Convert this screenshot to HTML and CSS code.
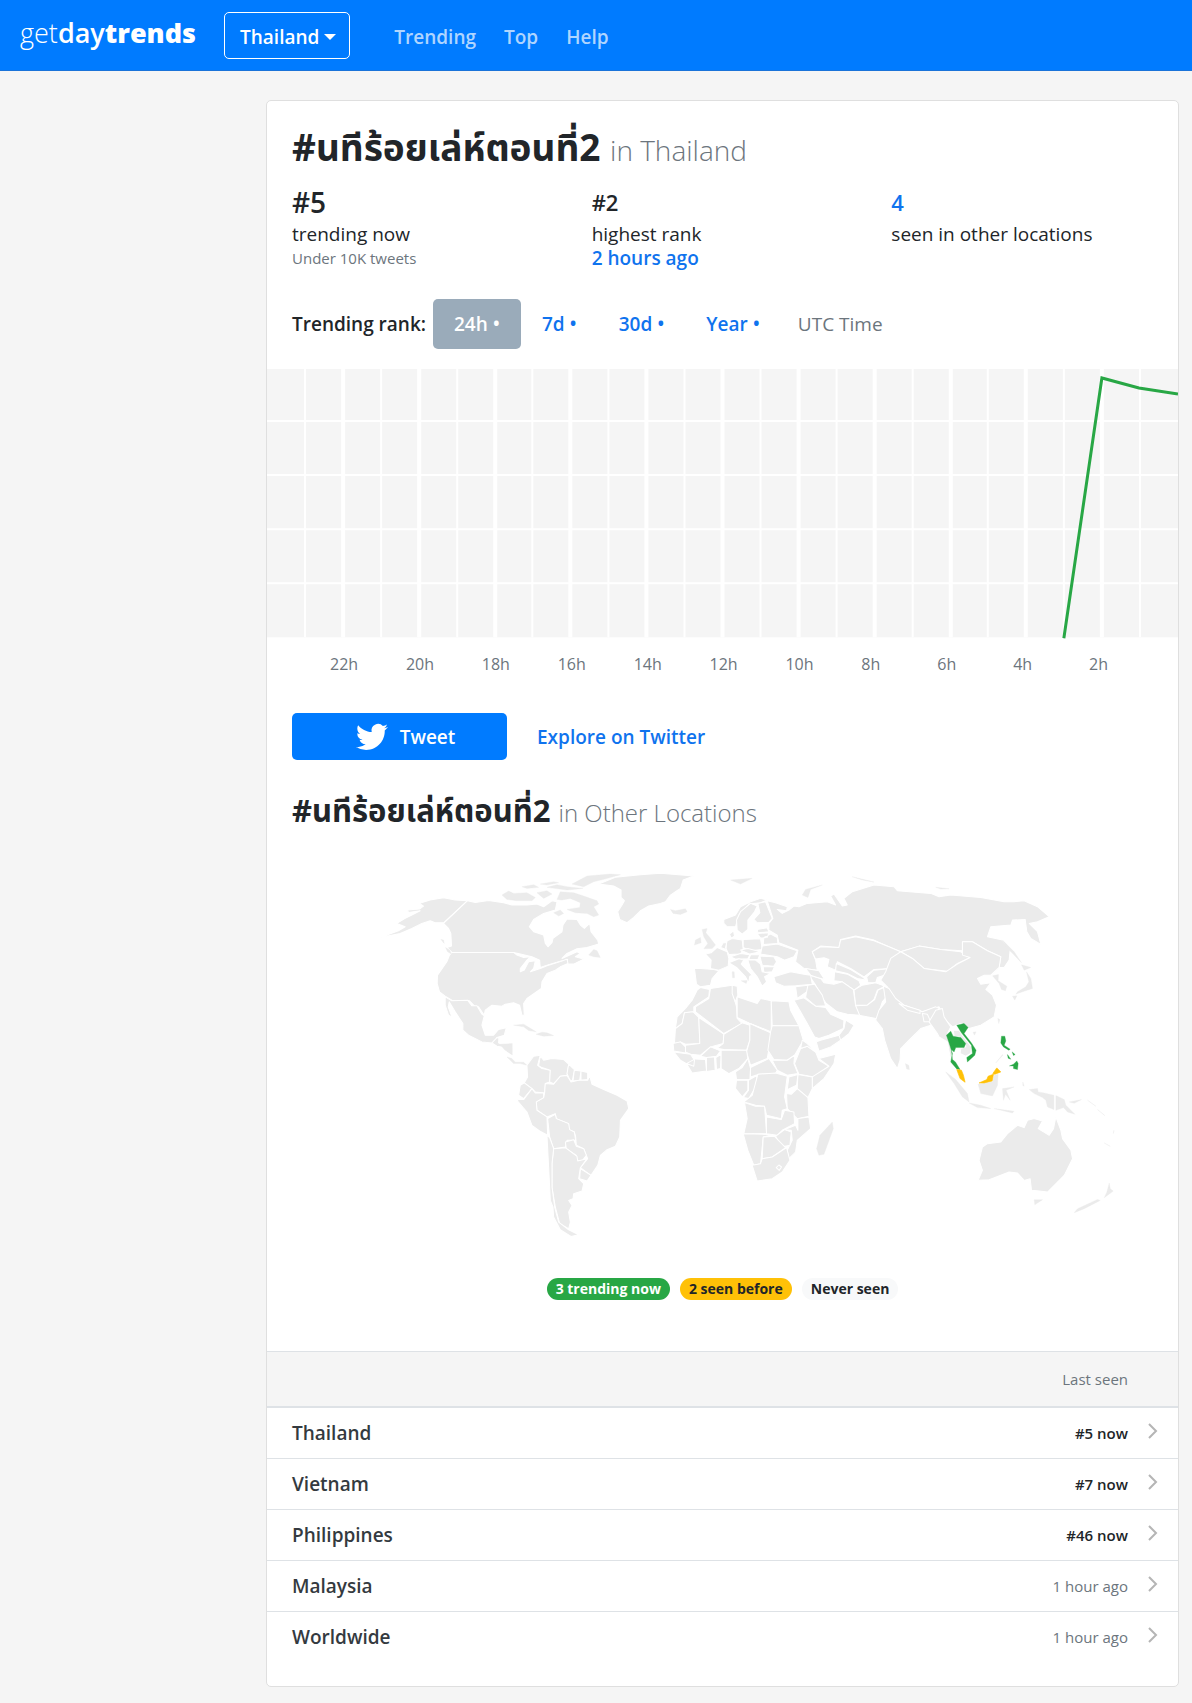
FILE: index.html
```html
<!DOCTYPE html>
<html lang="en">
<head>
    <meta charset="utf-8">
    <meta name="viewport" content="width=device-width, initial-scale=1">
    <title>#นทีร้อยเล่ห์ตอนที่2 in Thailand</title>
    <link rel="stylesheet" href="styles.css">
</head>
<body>
<header class="navbar">
    <a class="brand" href="#"><span class="thin">get</span>day<b>trends</b></a>
    <button type="button" class="btn-location">Thailand <span class="caret"></span></button>
    <nav class="nav-links">
        <a href="#">Trending</a>
        <a href="#">Top</a>
        <a href="#">Help</a>
    </nav>
</header>

<main class="page">
    <div class="card">
        <h1>#นทีร้อยเล่ห์ตอนที่2 <small>in Thailand</small></h1>

        <div class="stats">
            <div class="stat">
                <div class="stat-value stat-big">#5</div>
                <div>trending now</div>
                <div class="small muted">Under 10K tweets</div>
            </div>
            <div class="stat">
                <div class="stat-value">#2</div>
                <div>highest rank</div>
                <a href="#">2 hours ago</a>
            </div>
            <div class="stat">
                <div class="stat-value"><a href="#locations">4</a></div>
                <div>seen in other locations</div>
            </div>
        </div>

        <div class="range">
            <span class="range-label">Trending rank:</span>
            <a class="pill active" href="#">24h •</a>
            <a class="pill" href="#">7d •</a>
            <a class="pill" href="#">30d •</a>
            <a class="pill" href="#">Year •</a>
            <span class="utc muted">UTC Time</span>
        </div>

        <svg class="chart" viewBox="0 0 910 270" role="img" aria-label="Trending rank, last 24 hours">
            <rect class="chart-bg" width="910" height="268"/>
            <path class="grid-minor" d="M38 0V268M114 0V268M190 0V268M265 0V268M341 0V268M417 0V268M493 0V268M569 0V268M645 0V268M720 0V268M796 0V268M872 0V268M0 52H910M0 106H910M0 160H910M0 214H910"/>
            <path class="grid-major" d="M76 0V268M152 0V268M228 0V268M303 0V268M379 0V268M455 0V268M531 0V268M607 0V268M683 0V268M758 0V268M834 0V268"/>
            <path class="line" d="M796 269L834 9L871 19Q890 22 910 25"/>
        </svg>
        <div class="chart-labels">
            <span>22h</span><span>20h</span><span>18h</span><span>16h</span><span>14h</span><span>12h</span><span>10h</span><span>8h</span><span>6h</span><span>4h</span><span>2h</span>
        </div>

        <div class="actions">
            <button type="button" class="btn-tweet">
                <svg viewBox="0 0 24 24" aria-hidden="true"><path d="M23.953 4.57a10 10 0 01-2.825.775 4.958 4.958 0 002.163-2.723c-.951.555-2.005.959-3.127 1.184a4.92 4.92 0 00-8.384 4.482C7.69 8.095 4.067 6.13 1.64 3.162a4.822 4.822 0 00-.666 2.475c0 1.71.87 3.213 2.188 4.096a4.904 4.904 0 01-2.228-.616v.06a4.923 4.923 0 003.946 4.827 4.996 4.996 0 01-2.212.085 4.936 4.936 0 004.604 3.417 9.867 9.867 0 01-6.102 2.105c-.39 0-.779-.023-1.17-.067a13.995 13.995 0 007.557 2.209c9.053 0 13.998-7.496 13.998-13.985 0-.21 0-.42-.015-.63A9.935 9.935 0 0024 4.59z"/></svg>
                Tweet
            </button>
            <a href="#">Explore on Twitter</a>
        </div>

        <h2 id="locations">#นทีร้อยเล่ห์ตอนที่2 <small>in Other Locations</small></h2>

        <svg class="map" viewBox="0 0 2730 1200" role="img" aria-label="World map">
            <!-- North America, Greenland -->
            <g transform="translate(339 30)">
                <path d="M50 190L75 175L95 165L120 152L85 157L82 150L118 147L130 138L118 130L150 120L190 113L225 120L262 122L190 188L165 188L150 182L125 190L95 205L60 220L0 232L55 212L75 200Z"/>
                <path d="M262 122L285 127L325 121L370 128L395 135L440 135L470 132L490 140L515 122L530 125L525 150L490 160L460 178L447 200L460 215L490 225L495 250L503 260L515 248L518 235L545 215L548 195L560 177L590 178L600 195L612 205L628 190L632 215L652 240L655 252L620 262L590 266L560 280L545 295L590 275L600 280L585 290L610 297L580 312L560 312L562 298L540 303L500 315L480 322L478 300L455 290L430 284L400 277L215 277L200 262L214 258L212 220L205 205L190 190Z"/>
                <path d="M215 277L400 277L410 285L430 292L450 290L440 300L420 325L420 335L432 330L445 305L465 302L460 325L450 335L480 325L500 317L545 303L560 297L563 310L540 320L525 330L500 340L485 365L483 385L440 415L430 430L432 465L425 465L418 435L400 428L375 432L365 438L335 435L315 450L312 465L295 440L285 440L268 422L215 420L195 408L178 395L171 370L172 345L200 305L208 285Z"/>
                <path d="M195 410L215 422L262 420L275 437L290 437L305 462L312 467L305 495L315 525L340 525L355 508L378 503L372 525L350 532L345 545L335 548L305 545L265 525L248 510L248 490L225 455L207 425L204 440L215 470L205 465L195 435Z"/>
                <path d="M335 548L350 532L356 534L355 548L365 552L395 555L397 585L380 575L372 562L350 558Z"/>
                <path class="isle" d="M400 495L430 492L468 515L445 511L430 500ZM467 522L485 516L500 518L520 526L490 528Z"/>
                <path class="isle" d="M365 105L385 93L400 100L440 98L465 112L455 122L410 122L380 118ZM470 98L500 92L515 102L490 115ZM530 118L540 95L580 98L610 108L650 122L655 132L640 140L655 165L640 170L620 160L585 158L560 148L598 142L600 128L570 115L545 120ZM575 72L620 48L690 42L720 44L670 58L640 65L610 80ZM500 82L530 74L560 80L608 85L560 90ZM425 80L460 74L475 82L440 85ZM520 158L540 150L550 160L535 168ZM480 72L520 65L535 68L500 75Z"/>
                <path class="isle" d="M625 285L640 268L650 272L660 292L640 290ZM182 238L190 240L192 250ZM196 262L208 270L214 282L202 275Z"/>
                <path d="M655 72L705 52L780 44L840 40L940 48L908 60L900 85L885 95L870 105L855 125L840 130L805 138L780 152L760 172L740 188L718 178L712 155L725 135L732 122L722 112L722 90L700 78Z"/>
            </g>
            <!-- South America -->
            <g transform="translate(699 570)">
                <path class="isle" d="M20 50L35 55L45 66L70 66L80 75L60 70L40 70ZM0 12L36 10L36 44L12 28Z"/>
                <path d="M80 75L100 48L120 45L112 75L125 85L150 90L148 125L135 130L133 158L105 155L95 145L72 128L82 110Z"/>
                <path d="M120 48L130 60L155 55L190 58L205 72L200 105L180 108L160 130L148 125L150 90L125 82L115 76Z"/>
                <path d="M205 72L222 88L216 122L208 118L200 100ZM222 90L242 92L238 120L218 122ZM242 92L262 97L262 118L242 120Z"/>
                <path d="M133 158L135 130L160 132L180 108L200 106L212 125L235 120L262 120L268 107L275 132L315 150L350 165L380 182L385 205L360 240L358 290L345 318L320 328L300 345L292 375L272 405L240 382L262 355L250 325L228 315L226 290L222 275L205 268L205 250L168 235L165 220L140 230L110 210L108 185L130 172Z"/>
                <path d="M60 135L72 128L95 145L70 175L55 165Z"/>
                <path d="M55 178L70 178L95 145L105 158L130 158L130 172L108 185L110 210L140 230L142 285L118 272L95 255L80 215L50 180Z"/>
                <path d="M142 235L165 222L168 235L205 250L208 268L222 275L226 300L200 300L195 320L160 325L148 290Z"/>
                <path d="M195 305L220 298L228 318L250 325L258 345L245 362L230 360L228 345L198 325Z"/>
                <path d="M240 385L272 405L260 422L238 415Z"/>
                <path d="M160 325L195 322L230 348L232 362L260 355L240 382L235 415L250 430L245 452L220 460L218 475L205 480L215 495L205 515L210 545L205 565L178 550L165 500L155 440L155 370Z"/>
                <path d="M140 285L148 292L160 325L155 370L155 440L163 500L175 545L205 568L235 583L212 588L180 568L160 530L158 500L150 480L146 400Z"/>
            </g>
            <!-- Europe, Russia and the Middle East -->
            <g transform="translate(1179 30)">
                <path class="isle" d="M30 148L45 152L75 146L80 155L60 163L38 160Z"/>
                <path d="M320 122L345 128L380 140L378 152L350 148L365 160L385 150L400 138L415 140L440 130L500 125L525 135L510 108L520 102L545 138L560 135L550 115L575 95L640 75L700 80L710 92L810 100L835 110L870 105L960 112L1030 125L1060 125L1090 122L1130 140L1165 170L1130 185L1105 190L1130 215L1140 253L1110 235L1098 215L1093 178L1055 180L1050 195L990 200L980 230L1025 240L1048 270L1045 300L1030 322L1015 322L1020 290L980 272L935 245L905 245L905 272L840 268L775 258L720 275L690 262L640 240L585 228L540 238L535 262L480 258L455 275L465 300L470 330L430 325L405 305L412 270L355 248L350 225L325 210L325 190L337 175Z"/>
                <path d="M190 178L225 165L240 140L270 125L300 115L320 120L300 128L265 132L235 165L225 200L200 200L190 190Z"/>
                <path d="M228 180L240 155L270 130L290 138L282 155L262 180L262 208L245 222L230 210Z"/>
                <path d="M292 130L315 125L335 175L325 187L290 188L280 178L298 158Z"/>
                <path class="isle" d="M125 208L140 205L136 218L148 232L165 255L155 265L130 266L142 250L130 230ZM105 240L120 232L122 248L102 255Z"/>
                <path d="M102 325L120 325L160 328L175 332L155 355L150 375L120 380L108 372Z"/>
                <path d="M135 282L152 278L170 262L200 275L205 295L203 318L175 330L150 325L152 300Z"/>
                <path d="M200 242L215 235L245 240L248 265L240 282L205 283L195 262ZM180 262L188 248L198 248L197 268ZM207 222L219 212L222 228L212 234Z"/>
                <path d="M248 238L300 236L305 268L270 272L248 262Z"/>
                <path d="M290 208L320 203L325 215L292 218ZM290 220L325 218L320 232L300 234ZM310 232L330 222L350 232L352 250L308 253Z"/>
                <path d="M305 258L350 252L410 272L400 290L372 300L350 290L300 282Z"/>
                <path d="M240 270L262 265L300 275L268 282ZM210 290L240 280L268 284L262 296L225 297ZM270 284L298 284L292 298L265 298Z"/>
                <path d="M298 288L340 290L348 305L340 318L305 315ZM308 320L342 320L335 335L310 337Z"/>
                <path d="M262 300L285 300L300 312L305 335L330 340L312 350L318 365L305 378L290 350L270 325Z"/>
                <path d="M205 308L235 296L250 300L242 312L275 345L268 348L264 368L255 350L228 322Z"/>
                <path class="isle" d="M215 335L221 335L222 353L216 353ZM242 362L260 361L257 370Z"/>
                <path class="isle" d="M210 60L275 55L240 72ZM425 105L435 88L485 75L450 88L442 112ZM575 50L640 66L605 60Z"/>
                <path d="M455 275L480 260L535 262L540 240L585 230L640 242L690 262L720 275L705 290L690 325L640 328L610 350L570 325L530 305L525 330L500 320L505 298L490 293L465 297Z"/>
                <path d="M527 310L570 328L605 350L618 360L590 355L560 340L525 332ZM522 335L560 342L595 362L600 375L580 390L545 365L520 362ZM618 350L640 330L690 325L680 342L650 352L645 368L622 368Z"/>
                <path d="M580 390L605 375L645 368L672 378L650 390L640 418L620 435L585 435Z"/>
                <path d="M585 437L620 435L642 418L652 390L675 380L690 395L665 425L655 455L662 478L630 472L595 465Z"/>
                <path d="M445 345L480 355L490 368L520 372L545 365L578 388L585 437L597 465L560 462L530 455L497 430L480 405L465 375Z"/>
                <path d="M340 350L390 335L430 342L450 345L455 372L405 377L370 378L345 368ZM435 325L475 332L492 358L470 352L450 345Z"/>
                <path d="M405 380L442 375L438 395L410 415ZM442 375L462 372L485 405L495 437L465 438L435 412L438 395Z"/>
                <path d="M400 420L430 413L465 438L495 442L510 462L550 480L548 505L505 525L475 535L462 530L440 490L420 455Z"/>
                <path d="M467 545L480 540L535 525L540 540L510 560L475 573ZM550 505L555 480L580 495L565 520L540 540L535 525Z"/>
            </g>
            <!-- Africa -->
            <g transform="translate(1179 390)">
                <path d="M95 60L110 30L120 22L147 28L145 50L100 80L100 95L72 98L65 130L45 145L50 110L75 85Z"/>
                <path d="M45 145L65 130L72 98L98 95L115 112L118 190L75 192L60 185L42 190Z"/>
                <path d="M38 190L60 185L75 200L75 218L40 212Z"/>
                <path d="M150 25L215 15L220 50L228 80L230 115L245 130L190 160L105 95L105 80L145 55Z"/>
                <path d="M215 15L230 18L232 45L224 65L215 40Z"/>
                <path d="M230 50L290 70L300 55L332 62L332 155L265 128L230 112Z"/>
                <path d="M332 62L385 65L390 90L415 137L335 137Z"/>
                <path d="M115 112L190 162L188 190L150 200L120 225L90 222L75 215L75 195L118 190Z"/>
                <path d="M190 162L245 128L268 135L268 180L258 210L190 208L170 204L188 190Z"/>
                <path d="M268 130L330 158L328 190L320 235L270 255L258 215L268 180Z"/>
                <path d="M335 137L415 137L428 180L402 225L380 240L340 238L322 210L330 155Z"/>
                <path d="M335 240L380 240L402 225L400 250L412 280L380 285L350 270Z"/>
                <path d="M402 250L420 205L440 198L465 215L475 240L505 258L460 290L415 282Z"/>
                <path d="M425 180L440 190L468 218L440 198L420 205Z"/>
                <path d="M475 235L525 222L520 250L490 295L455 325L455 290L505 258Z"/>
                <path d="M412 283L455 290L455 325L442 352L410 325Z"/>
                <path d="M385 290L412 283L408 315L380 328Z"/>
                <path d="M378 340L392 342L410 325L442 352L445 408L410 415L380 385Z"/>
                <path d="M40 215L90 222L102 240L100 258L78 250L60 240ZM78 250L104 236L135 238L138 272L95 278ZM138 230L162 230L164 270L138 274ZM166 232L182 222L180 265L168 268Z"/>
                <path d="M120 228L150 200L180 212L168 228L138 232Z"/>
                <path d="M182 210L258 210L262 235L235 265L205 280L182 265Z"/>
                <path d="M262 235L270 265L268 298L228 298L225 275L245 262Z"/>
                <path d="M270 262L325 235L350 270L345 280L295 282L270 290Z"/>
                <path d="M228 300L262 300L262 330L245 350L225 325ZM264 300L290 285L285 320L265 355L248 352L264 330Z"/>
                <path d="M292 282L345 278L380 288L372 350L380 385L365 390L362 415L318 405L312 378L285 375L250 365L275 345Z"/>
                <path d="M252 367L285 378L312 378L318 460L250 460L260 415Z"/>
                <path d="M318 410L362 418L372 390L400 395L402 430L365 450L350 465L318 460Z"/>
                <path d="M445 410L450 445L410 480L405 515L385 535L380 510L395 480L392 450L372 448L405 435L412 450L412 415Z"/>
                <path d="M345 468L372 448L392 455L388 495L362 500Z"/>
                <path d="M248 460L335 463L308 470L300 550L280 555L262 510Z"/>
                <path d="M308 470L342 468L375 502L335 530L305 535Z"/>
                <path d="M275 555L300 550L305 535L335 530L378 502L388 540L365 575L335 595L290 602Z"/>
                <path d="M347 562L355 554L363 560L356 570Z"/>
                <path class="isle" d="M515 425L518 445L490 522L475 525L468 505L478 465Z"/>
            </g>
            <!-- Asia -->
            <g transform="translate(1839 30)">
                <path d="M60 275L115 258L180 268L240 275L268 292L230 310L200 333L130 325L95 295Z"/>
                <path d="M60 275L95 295L130 325L195 335L230 312L268 292L245 285L245 245L275 245L320 272L360 290L355 322L330 345L310 345L290 355L300 372L330 368L315 388L335 405L347 435L340 470L300 495L265 505L240 490L215 500L190 475L175 440L125 455L70 435L40 415L20 380L0 360L15 335L30 295Z"/>
                <path d="M8 378L25 385L45 415L70 435L125 455L165 440L185 450L165 480L150 495L120 505L85 540L60 565L58 600L50 625L30 595L12 540L5 505L-15 480L-5 450L15 425Z"/>
                <path d="M55 430L70 435L118 450L118 460L80 450ZM125 460L140 462L150 485L130 485Z"/>
                <path class="isle" d="M74 610L84 615L86 628L78 626Z"/>
                <path class="isle" d="M422 314L450 322L430 330ZM437 335L450 355L455 385L430 393L405 402L410 395L435 380L444 365ZM395 408L408 407L402 420ZM365 240L400 275L422 308L400 285L375 260Z"/>
                <path class="isle" d="M335 347L353 343L352 362L378 378L374 392L362 388L355 370Z"/>
                <path class="isle" d="M351 475L357 478L354 490ZM277 516L286 515L281 525ZM165 82L205 86L180 87Z"/>
            </g>
            <!-- South-east Asia and Oceania -->
            <g transform="translate(1899 450)">
                <path d="M110 100L85 65L105 30L125 25L130 50L150 80L140 100L155 150L150 180L140 125L115 110Z"/>
                <path d="M158 90L175 90L185 105L212 140L210 160L195 168L178 160L180 145L195 140L192 125L175 110L160 108Z"/>
                <path class="isle" d="M232 252L275 244L280 225L292 222L290 255L275 287L240 280Z"/>
                <path class="isle" d="M135 215L165 238L200 280L205 305L185 290L160 250ZM205 308L240 315L270 325L230 322ZM305 265L340 260L316 270L328 300L314 282L308 300ZM280 325L340 333L335 338ZM285 188L305 163L306 165ZM366 245L370 258L366 256Z"/>
                <path class="isle" d="M385 268L410 265L412 275L430 278L459 285L459 328L440 320L435 300L425 292L400 280ZM465 286L490 298L495 315L522 342L500 335L488 322L465 330ZM505 305L542 298L520 309Z"/>
                <path class="speck" d="M560 300L585 318M590 328L612 346M610 428L628 438M637 400L639 390"/>
                <path d="M232 540L245 510L235 480L245 440L260 430L300 425L320 400L350 375L370 382L380 360L400 355L425 362L412 385L445 405L458 385L465 350L480 390L485 415L510 450L515 475L490 525L440 575L415 572L392 570L388 535L370 540L350 518L325 515L265 538Z"/>
                <path class="isle" d="M400 598L425 598L402 613ZM625 548L628 565L637 572L610 592L618 575ZM590 597L598 600L550 625L520 637L530 625Z"/>
                <path class="now" d="M137 105L150 93L157 108L180 112L195 130L190 142L165 142L160 155L152 148L155 178L164 185L178 208L168 206L150 185L155 160L145 128Z"/>
                <path class="now" d="M168 75L190 70L202 82L190 100L212 128L226 150L222 165L200 185L198 172L215 160L212 135L182 98Z"/>
                <path class="now" d="M302 108L312 108L315 122L310 135L328 147L324 150L308 140L300 128ZM334 155L343 163L338 166ZM320 163L330 177L322 174ZM326 197L338 192L348 182L352 190L350 208L338 205L338 197Z"/>
                <path class="before" d="M168 208L182 210L188 225L193 246L178 235ZM235 248L258 238L262 228L278 222L274 242L250 248ZM276 220L288 203L300 215L282 222Z"/>
            </g>
        </svg>

        <div class="legend">
            <span class="badge badge-now">3 trending now</span>
            <span class="badge badge-before">2 seen before</span>
            <span class="badge badge-never">Never seen</span>
        </div>

        <table class="locations">
            <thead>
                <tr><th></th><th>Last seen</th><th></th></tr>
            </thead>
            <tbody>
                <tr>
                    <td><a href="#">Thailand</a></td>
                    <td class="seen strong">#5 now</td>
                    <td class="arrow"><svg viewBox="0 0 10 16"><path d="M1 1L8 8L1 15"/></svg></td>
                </tr>
                <tr>
                    <td><a href="#">Vietnam</a></td>
                    <td class="seen strong">#7 now</td>
                    <td class="arrow"><svg viewBox="0 0 10 16"><path d="M1 1L8 8L1 15"/></svg></td>
                </tr>
                <tr>
                    <td><a href="#">Philippines</a></td>
                    <td class="seen strong">#46 now</td>
                    <td class="arrow"><svg viewBox="0 0 10 16"><path d="M1 1L8 8L1 15"/></svg></td>
                </tr>
                <tr>
                    <td><a href="#">Malaysia</a></td>
                    <td class="seen">1 hour ago</td>
                    <td class="arrow"><svg viewBox="0 0 10 16"><path d="M1 1L8 8L1 15"/></svg></td>
                </tr>
                <tr>
                    <td><a href="#">Worldwide</a></td>
                    <td class="seen">1 hour ago</td>
                    <td class="arrow"><svg viewBox="0 0 10 16"><path d="M1 1L8 8L1 15"/></svg></td>
                </tr>
            </tbody>
        </table>
    </div>
</main>
</body>
</html>
```
FILE: styles.css
```css
* {
    box-sizing: border-box;
}
body {
    margin: 0;
    font-family: "Open Sans", "Noto Sans", "Noto Sans Thai", sans-serif;
    font-size: 19px;
    line-height: 24px;
    color: #212529;
    background-color: #f5f5f5;
}
a {
    color: #0f73ee;
    font-weight: 600;
    text-decoration: none;
}
.muted {
    color: #6c757d;
}
.small {
    font-size: 15px;
}

/* top bar */
.navbar {
    display: flex;
    align-items: center;
    height: 71px;
    padding: 0 20px;
    background-color: #007bff;
    border-bottom: 1px solid #1a73d9;
}
.brand {
    margin-right: 28px;
    padding-bottom: 4px;
    font-size: 27px;
    line-height: 40px;
    color: #fff;
}
.brand .thin {
    font-weight: 300;
}
.btn-location {
    height: 47px;
    padding: 3px 13px 0 15px;
    font-family: inherit;
    font-size: 19px;
    font-weight: 600;
    color: #fff;
    background: none;
    border: 1px solid #fff;
    border-radius: 5px;
}
.caret {
    display: inline-block;
    vertical-align: 4px;
    border-top: 6px solid #fff;
    border-left: 6px solid transparent;
    border-right: 6px solid transparent;
}
.nav-links {
    display: flex;
    gap: 28px;
    margin-left: 44px;
    padding-top: 3px;
}
.nav-links a {
    color: rgba(255, 255, 255, 0.7);
}

/* card */
.page {
    padding: 29px 13px 17px 266px;
}
.card {
    background-color: #fff;
    border: 1px solid #dfdfdf;
    border-radius: 5px;
    overflow: hidden;
}
h1, h2 {
    margin: 0;
    padding: 0 25px;
    font-weight: 700;
}
h1 {
    padding-top: 22px;
    font-size: 37px;
    line-height: 48px;
}
h2 {
    padding-top: 30px;
    font-size: 31px;
    line-height: 40px;
}
h1 small, h2 small {
    font-weight: 300;
    color: #6c757d;
}
h1 small {
    font-size: 28px;
}
h2 small {
    font-size: 24px;
}
.stats {
    display: grid;
    grid-template-columns: repeat(3, 1fr);
    padding: 12px 6px 0;
}
.stat {
    padding: 0 19px;
}
.stat-value {
    margin-bottom: 4px;
    font-size: 22px;
    font-weight: 600;
    line-height: 32px;
}
.stat-big {
    font-size: 28px;
}
.range {
    display: flex;
    align-items: center;
    padding: 29px 25px 20px;
}
.range-label {
    margin-right: 7px;
    font-weight: 600;
}
.pill {
    padding: 13px 21px;
    border-radius: 5px;
}
.pill.active {
    color: #fff;
    background-color: #9aabba;
}
.utc {
    margin-left: 17px;
}

/* chart */
.chart {
    display: block;
    width: 100%;
}
.chart-bg {
    fill: #f5f5f5;
}
.grid-minor, .grid-major {
    stroke: #fff;
    stroke-width: 2;
}
.grid-major {
    stroke-width: 4;
}
.line {
    fill: none;
    stroke: #28a745;
    stroke-width: 3;
}
.chart-labels {
    display: grid;
    grid-template-columns: repeat(11, 1fr);
    padding: 13px 13px 37px 63px;
    font-size: 16px;
    color: #6c757d;
}
.actions {
    display: flex;
    align-items: center;
    gap: 30px;
    padding: 0 25px;
}
.btn-tweet {
    display: flex;
    align-items: center;
    justify-content: center;
    gap: 12px;
    width: 215px;
    height: 47px;
    padding: 0 0 0 12px;
    font-family: inherit;
    font-size: 19px;
    font-weight: 600;
    color: #fff;
    background-color: #007bff;
    border: 0;
    border-radius: 5px;
}
.btn-tweet svg {
    width: 32px;
    fill: #fff;
}

/* map */
.map {
    display: block;
    width: 100%;
    margin-top: 17px;
    fill: #ebebeb;
    stroke: #fff;
    stroke-width: 3;
    stroke-linejoin: round;
}
.map .isle {
    stroke: #ebebeb;
    stroke-width: 1;
}
.map .speck {
    stroke: #ebebeb;
    stroke-width: 2;
}
.map .now {
    fill: #28a745;
    stroke: #28a745;
    stroke-width: 1;
}
.map .before {
    fill: #ffc107;
    stroke: #ffc107;
    stroke-width: 2;
}
.legend {
    display: flex;
    justify-content: center;
    gap: 10px;
    padding: 27px 0 51px;
}
.badge {
    padding: 0 9px;
    font-size: 14px;
    font-weight: 700;
    line-height: 22px;
    border-radius: 11px;
}
.badge-now {
    color: #fff;
    background-color: #28a745;
}
.badge-before {
    background-color: #ffc107;
}
.badge-never {
    background-color: #f8f9fa;
}

/* locations */
.locations {
    width: 100%;
    margin-bottom: 24px;
    border-collapse: collapse;
}
.locations th {
    height: 56px;
    padding: 0;
    font-size: 15px;
    font-weight: 400;
    text-align: right;
    color: #6c757d;
    background-color: #f5f5f5;
    border-top: 1px solid #dee2e6;
    border-bottom: 2px solid #dee2e6;
}
.locations td {
    height: 51px;
    padding: 0;
    border-top: 1px solid #dee2e6;
}
.locations td:first-child {
    padding-left: 25px;
}
.locations td a {
    color: #343a40;
}
.locations .seen {
    font-size: 15px;
    text-align: right;
    color: #6c757d;
}
.locations .strong {
    font-weight: 600;
    color: #212529;
}
.locations .arrow {
    width: 50px;
    padding: 0 0 3px 20px;
}
.arrow svg {
    display: block;
    width: 10px;
    fill: none;
    stroke: #b5b5b5;
    stroke-width: 2;
}
```
